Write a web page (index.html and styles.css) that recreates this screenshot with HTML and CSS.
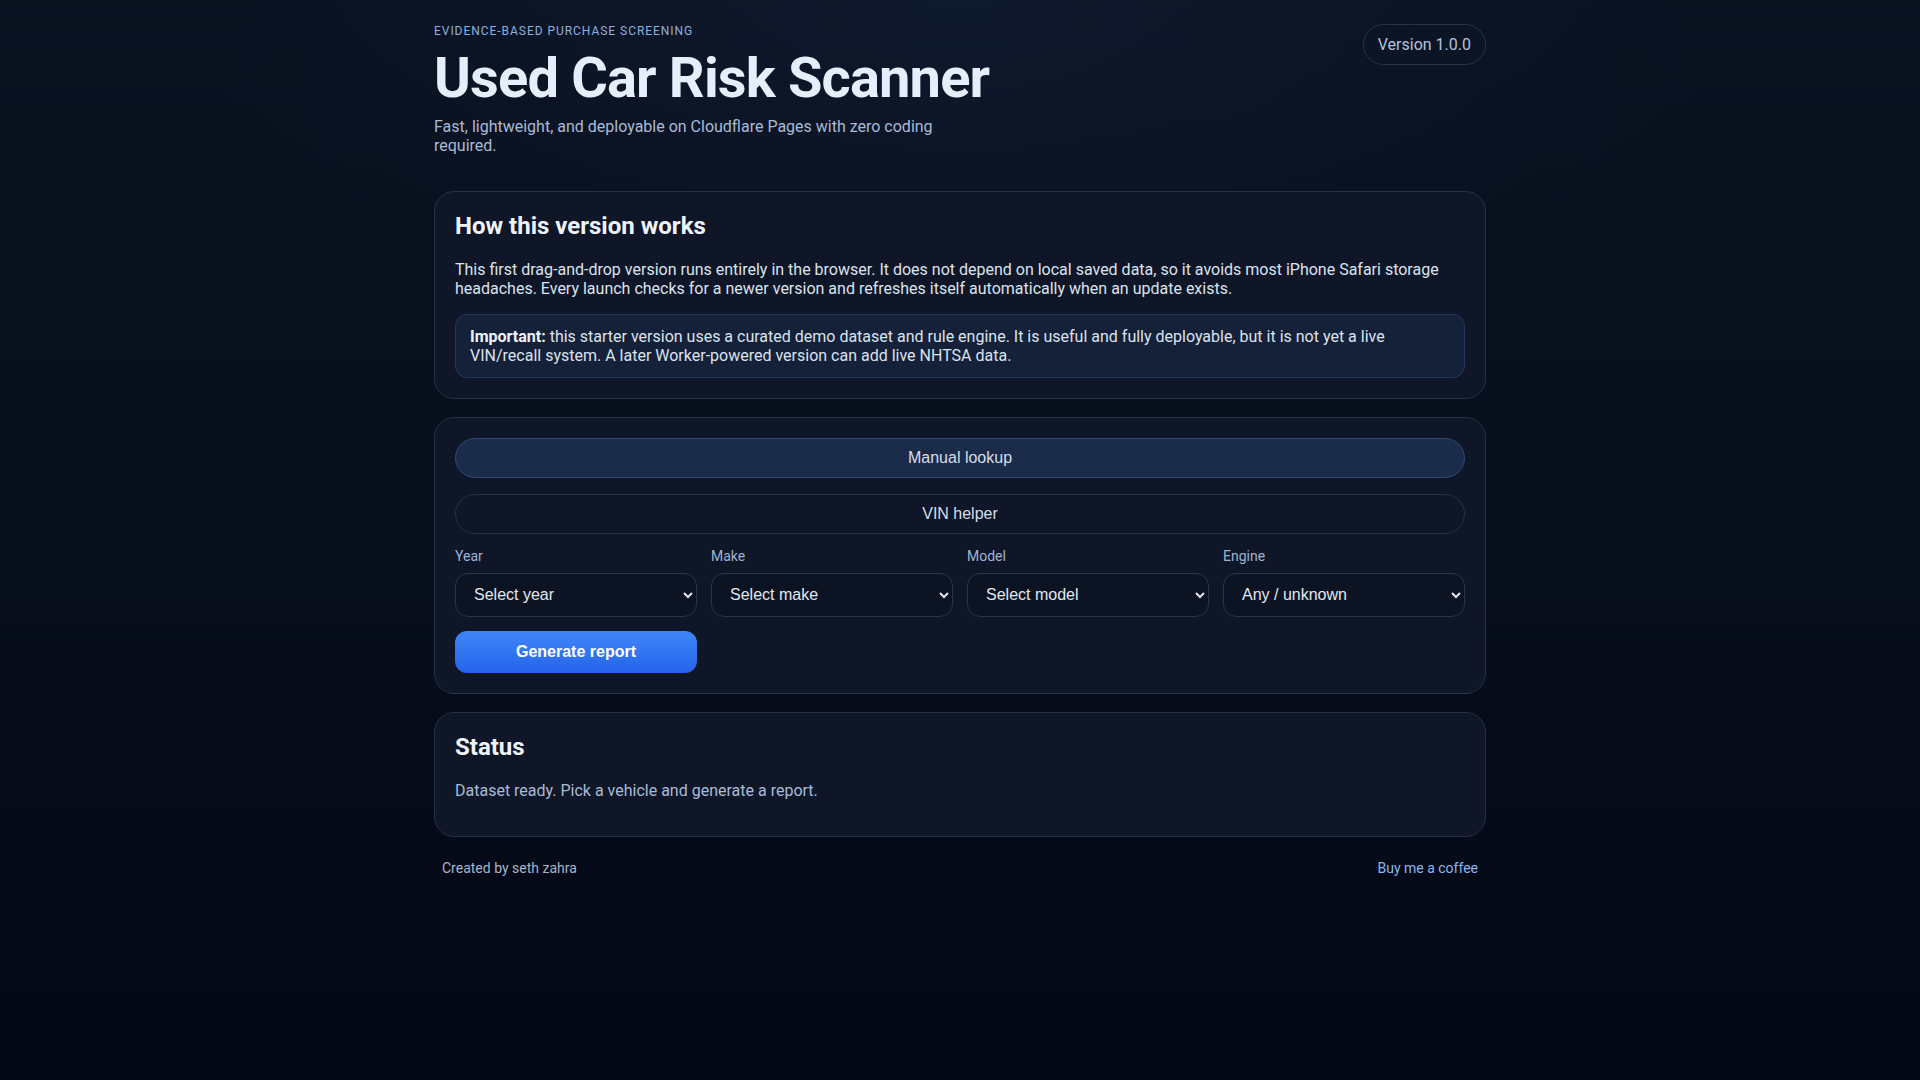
FILE: index.html
```html
<!DOCTYPE html>
<html lang="en">
<head>
<meta charset="utf-8">
<title>Used Car Risk Scanner</title>
<link rel="stylesheet" href="styles.css">
</head>
<body>
<main class="page">
  <header class="hero">
    <div class="hero-text">
      <p class="eyebrow">Evidence-based purchase screening</p>
      <h1 class="title">Used Car Risk Scanner</h1>
      <p class="subtitle">Fast, lightweight, and deployable on Cloudflare Pages with zero coding required.</p>
    </div>
    <span class="version-pill">Version 1.0.0</span>
  </header>

  <section class="card">
    <h2 class="card-title">How this version works</h2>
    <p class="card-text">This first drag-and-drop version runs entirely in the browser. It does not depend on local saved data, so it avoids most iPhone Safari storage headaches. Every launch checks for a newer version and refreshes itself automatically when an update exists.</p>
    <p class="notice"><strong>Important:</strong> this starter version uses a curated demo dataset and rule engine. It is useful and fully deployable, but it is not yet a live VIN/recall system. A later Worker-powered version can add live NHTSA data.</p>
  </section>

  <section class="card">
    <div class="tabs">
      <button class="tab tab-active" type="button">Manual lookup</button>
      <button class="tab" type="button">VIN helper</button>
    </div>
    <div class="fields">
      <label class="field">
        <span class="field-label">Year</span>
        <select class="field-select"><option>Select year</option></select>
      </label>
      <label class="field">
        <span class="field-label">Make</span>
        <select class="field-select"><option>Select make</option></select>
      </label>
      <label class="field">
        <span class="field-label">Model</span>
        <select class="field-select"><option>Select model</option></select>
      </label>
      <label class="field">
        <span class="field-label">Engine</span>
        <select class="field-select"><option>Any / unknown</option></select>
      </label>
    </div>
    <div class="actions">
      <button class="primary-btn" type="button">Generate report</button>
    </div>
  </section>

  <section class="card">
    <h2 class="card-title">Status</h2>
    <p class="card-text status-text">Dataset ready. Pick a vehicle and generate a report.</p>
  </section>

  <footer class="footer">
    <span class="footer-credit">Created by seth zahra</span>
    <a class="footer-link" href="#">Buy me a coffee</a>
  </footer>
</main>
</body>
</html>
```

FILE: styles.css
```css
* { box-sizing: border-box; }

html, body {
  margin: 0;
  min-height: 100%;
}

body {
  min-height: 1080px;
  background:
    radial-gradient(ellipse 1100px 500px at 50% 0%, rgba(20, 34, 58, 0.45), rgba(20, 34, 58, 0) 70%),
    linear-gradient(180deg, #0a1221 0%, #060d1b 55%, #030816 100%);
  color: #e2e8f0;
  font-family: Roboto, "Liberation Sans", Arial, sans-serif;
  font-size: 16px;
  color-scheme: dark;
}

.page {
  max-width: 1100px;
  margin: 0 auto;
  padding: 24px 24px 40px;
  display: flex;
  flex-direction: column;
  gap: 18px;
}

.hero {
  display: flex;
  justify-content: space-between;
  align-items: flex-start;
  margin-bottom: 18px;
}

.eyebrow {
  margin: 0 0 10px;
  font-size: 12px;
  letter-spacing: 0.08em;
  text-transform: uppercase;
  color: #8fb0dd;
  line-height: 14px;
}

.title {
  margin: 0;
  font-size: 56px;
  line-height: 1.1;
  font-weight: 700;
  letter-spacing: -0.015em;
  color: #e6eefb;
}

.subtitle {
  margin: 7px 0 0;
  max-width: 520px;
  color: #a9bbd6;
  font-size: 16px;
}

.version-pill {
  border: 1px solid #273349;
  border-radius: 999px;
  padding: 10px 14px;
  color: #b4c3da;
  font-size: 16px;
  white-space: nowrap;
}

.card {
  background: #0e1628;
  border: 1px solid #253146;
  border-radius: 20px;
  padding: 20px;
}

.card-title {
  margin: 0 0 20px;
  font-size: 24px;
  font-weight: 700;
  color: #eef3fb;
}

.card-text {
  margin: 0 0 16px;
  color: #dbe3ee;
}

.status-text {
  color: #a9bbd6;
}

.notice {
  margin: 0;
  background: #152039;
  border: 1px solid #24385a;
  border-radius: 12px;
  padding: 12px 12px 12px 14px;
  color: #dbe3ee;
}

.notice strong {
  font-weight: 700;
  color: #eef3fb;
}

.tabs {
  display: flex;
  flex-direction: column;
  gap: 16px;
  margin-bottom: 14px;
}

.tab {
  height: 40px;
  border-radius: 999px;
  border: 1px solid #253146;
  background: transparent;
  color: #d6deea;
  font-family: "Liberation Sans", Arial, sans-serif;
  font-size: 16px;
}

.tab-active {
  background: #1b2c4b;
  border-color: #2f4a74;
}

.fields {
  display: grid;
  grid-template-columns: repeat(4, 1fr);
  gap: 14px;
}

.field {
  display: flex;
  flex-direction: column;
  gap: 9px;
}

.field-label {
  font-size: 14px;
  color: #9fb3d1;
}

.field-select {
  height: 44px;
  border-radius: 13px;
  border: 1px solid #2a3648;
  background: #0c1424;
  color: #e2e8f0;
  font-family: "Liberation Sans", Arial, sans-serif;
  font-size: 16px;
  padding: 0 10px 0 14px;
}

.actions {
  display: grid;
  grid-template-columns: repeat(4, 1fr);
  gap: 14px;
  margin-top: 14px;
}

.primary-btn {
  height: 42px;
  border: none;
  border-radius: 12px;
  background: linear-gradient(180deg, #3f87f7 0%, #2563eb 100%);
  color: #ffffff;
  font-family: "Liberation Sans", Arial, sans-serif;
  font-size: 16px;
  font-weight: 700;
}

.footer {
  display: flex;
  justify-content: space-between;
  padding: 5px 8px 0;
  font-size: 14px;
}

.footer-credit {
  color: #a7b5c9;
}

.footer-link {
  color: #8fb6ee;
  text-decoration: none;
}
```
